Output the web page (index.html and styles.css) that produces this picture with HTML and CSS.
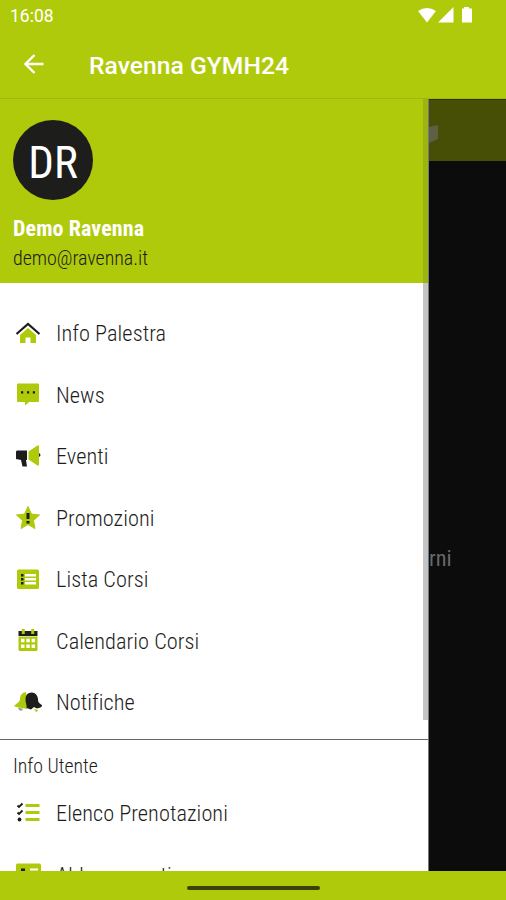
FILE: index.html
```html
<!DOCTYPE html>
<html lang="it">
<head>
<meta charset="utf-8">
<title>Ravenna GYMH24</title>
<link rel="stylesheet" href="styles.css">
</head>
<body>
<div class="phone">
  <header class="top">
    <div class="status">
      <span class="clock">16:08</span>
      <svg class="signals" width="56" height="18" viewBox="0 0 56 18"><path d="M0 4Q9-2 18 4L9 15.500ZM20 15.500 35.500 0V15.500ZM44 1.500H46V0H51V1.500H54V15.500H44Z" fill="#fff"/></svg>
    </div>
    <div class="appbar">
      <svg class="back" width="20" height="20" viewBox="0 0 20 20"><path d="M19.500 10H2M10.500 1 1.500 10l9 9" fill="none" stroke="#fff" stroke-width="2.400"/></svg>
      <h1>Ravenna GYMH24</h1>
    </div>
  </header>
  <main class="body">
    <aside class="drawer">
      <section class="profile">
        <div class="avatar"><span>DR</span></div>
        <strong class="name">Demo Ravenna</strong>
        <span class="mail">demo@ravenna.it</span>
      </section>
      <nav class="menu">
        <a class="item"><svg viewBox="0 0 28 28"><path d="M6 15 14 8l8 7v8H16.500V17.500h-5V23H6Z" fill="#afca0b"/><path d="M2.500 14 14 4l11.500 10" fill="none" stroke="#1d1d1b" stroke-width="2.200"/></svg><span>Info Palestra</span></a>
        <a class="item"><svg viewBox="0 0 28 28"><path d="M4 2.500H24Q25 2.500 25 3.500V20Q25 21 24 21H15L11 24.500V21H4Q3 21 3 20V3.500Q3 2.500 4 2.500Z" fill="#afca0b"/><path d="M7 10.300h2.200v2.200H7zM13 10.300h2.200v2.200H13zM18.800 10.300H21v2.200h-2.200z" fill="#1d1d1b"/></svg><span>News</span></a>
        <a class="item"><svg viewBox="0 0 28 28"><path d="M3 7.500H13V17H12L13 23.500H8.500L7 17 2 16V8.500ZM25 10q3 2 0 4Z" fill="#1d1d1b"/><path d="M14.500 8.500 23.500 2.500H25V22.500H23.500L14.500 16.500Z" fill="#afca0b"/></svg><span>Eventi</span></a>
        <a class="item"><svg viewBox="0 0 28 28"><path d="m14 2.500 3.500 7.500 8 1-6 5.500 1.500 8-7-4-7 4 1.500-8-6-5.500 8-1Z" fill="#afca0b" stroke="#afca0b" stroke-linejoin="round"/><path d="M12.500 9h3v6h-3zM12.500 17h3v2.500h-3z" fill="#1d1d1b"/></svg><span>Promozioni</span></a>
        <a class="item"><svg viewBox="0 0 28 28"><rect x="3" y="3.500" width="22" height="19.500" rx="1.500" fill="#afca0b"/><path d="M11 9.300h11M11 13.300h11M11 17.300h11" stroke="#fff" stroke-width="2.600"/><path d="M7 8h2.500v2.500H7zM7 12h2.500v2.500H7zM7 16h2.500v2.500H7z" fill="#1d1d1b"/></svg><span>Lista Corsi</span></a>
        <a class="item"><svg viewBox="0 0 28 28"><path d="M4.500 9.500h19V22.500q0 1.500-1.500 1.500H6Q4.500 24 4.500 22.500Z" fill="#afca0b"/><path d="M4.500 4h19V9h-19z" fill="#1d1d1b"/><path d="M9.300 2v5M18.700 2v5" stroke="#afca0b" stroke-width="3"/><path d="M7 11.700h3.500v3.500H7zM12.300 11.700h3.500v3.500h-3.500zM17.600 11.700h3.500v3.500h-3.500zM7 17.500h3.500V21H7zM12.300 17.500h3.500V21h-3.500zM17.600 17.500h3.500V21h-3.500z" fill="#fff"/></svg><span>Calendario Corsi</span></a>
        <a class="item"><svg viewBox="0 0 28 28"><path d="M12 3Q6 4 6 10C6 13 3 14 0 17l2 1 11 2ZM20 20l4 1-1 2q-2 0-3-3Z" fill="#afca0b"/><path d="M4 18.500l5 1.500q-1 3-4 1Z" fill="#999"/><path d="M14 4.500c6-3 9.500 1 10 5.500 0 4 1.500 4 4.500 6.500l-2 2-3.500 1-3-1.500-3 2.500-4.500-1.500C13 17 11.500 14 11.500 10q0-4 2.500-5.500Z" fill="#1d1d1b"/></svg><span>Notifiche</span></a>
      </nav>
      <section class="user">
        <h2>Info Utente</h2>
        <a class="item"><svg viewBox="0 0 28 28"><path d="M11.500 5.500h14M11.500 12.500h14M11.500 19.500h14" stroke="#afca0b" stroke-width="2.800"/><path d="m3.500 5.500 1.500 1.500 3.500-3.500M3.500 12.500 5 14l3.500-3.500" fill="none" stroke="#1d1d1b" stroke-width="1.800"/><circle cx="5.500" cy="19.500" r="1.900" fill="#1d1d1b"/></svg><span>Elenco Prenotazioni</span></a>
        <a class="item"><svg viewBox="0 0 28 28"><rect x="2" y="2.500" width="25" height="20" rx="1.500" fill="#afca0b"/><path d="M7 7.500h4v5H7z" fill="#1d1d1b"/><path d="M16 8.500h8M16 13h8" stroke="#fff" stroke-width="2"/></svg><span>Abbonamenti</span></a>
      </section>
      <i class="scrollbar"></i>
    </aside>
    <section class="page">
      <div class="tabs"><svg width="10" height="20" viewBox="0 0 10 20"><path d="M0 3 9 1V15L0 19Z" fill="#5d6044"/></svg></div>
      <p class="days">rni</p>
    </section>
  </main>
  <footer class="bottom"><i class="handle"></i></footer>
</div>
</body>
</html>
```
FILE: styles.css
```css
* { box-sizing: border-box; }
body { margin: 0; background: #afca0b; }
.phone { width: 506px; height: 900px; display: flex; flex-direction: column; overflow: hidden; font-family: "Roboto Condensed", Roboto, sans-serif; font-stretch: 75%; color: #1d1d1b; }
svg { display: block; flex: none; }
.top { height: 99px; flex: none; background: #afca0b; color: #fff; font-family: Roboto, sans-serif; font-stretch: 100%; border-bottom: 1px solid #9fb80c; }
.status { height: 32px; display: flex; justify-content: space-between; padding: 7px 32px 0 10px; }
.clock { font-size: 17.500px; line-height: 19px; }
.appbar { height: 64px; display: flex; align-items: center; padding-left: 24px; gap: 45px; }
h1 { margin: 3px 0 0; font-size: 24.700px; font-weight: 500; line-height: 30px; white-space: nowrap; }
.body { flex: 1; display: flex; min-height: 0; }
.drawer { width: 429px; flex: none; position: relative; background: #fff; overflow: hidden; border-right: 1px solid #777; }
.profile { height: 184px; background: #afca0b; padding: 21px 13px 0; display: flex; flex-direction: column; align-items: flex-start; }
.avatar { width: 80px; height: 80px; border-radius: 50%; background: #1d1d1b; color: #fff; display: flex; align-items: center; justify-content: center; font-size: 45px; padding-top: 4px; }
.name { color: #fff; font-size: 22px; line-height: 28px; margin-top: 15px; letter-spacing: .1px; white-space: nowrap; }
.mail { font-size: 20px; font-weight: 330; line-height: 28px; margin-top: 1px; letter-spacing: -.05px; }
.menu { padding-top: 20px; height: 457px; border-bottom: 1px solid #666; }
.item { height: 61.500px; display: flex; align-items: center; padding-left: 14px; gap: 14px; font-size: 22.300px; font-weight: 360; letter-spacing: .05px; line-height: 28px; white-space: nowrap; }
.item span { margin-top: -1px; }
.item svg { width: 28px; height: 28px; }
h2 { margin: 0; padding: 13px 13px 0; height: 43px; font-size: 19.800px; line-height: 28px; font-weight: 360; }
.scrollbar { position: absolute; right: 0; top: 0; width: 5px; height: 621px; background: linear-gradient(#9cb414 184px, #c4c4c4 184px); }
.page { flex: 1; background: #0c0c0c; overflow: hidden; }
.tabs { height: 62px; background: #464f05; padding-top: 24px; border-top: 1px solid #303605; }
.days { margin: 381px 0 0; color: #686868; font-size: 22.300px; line-height: 32px; }
.bottom { height: 29px; flex: none; background: #afca0b; display: flex; justify-content: center; padding-top: 15px; }
.handle { width: 133px; height: 4px; border-radius: 2px; background: #394207; }
```
